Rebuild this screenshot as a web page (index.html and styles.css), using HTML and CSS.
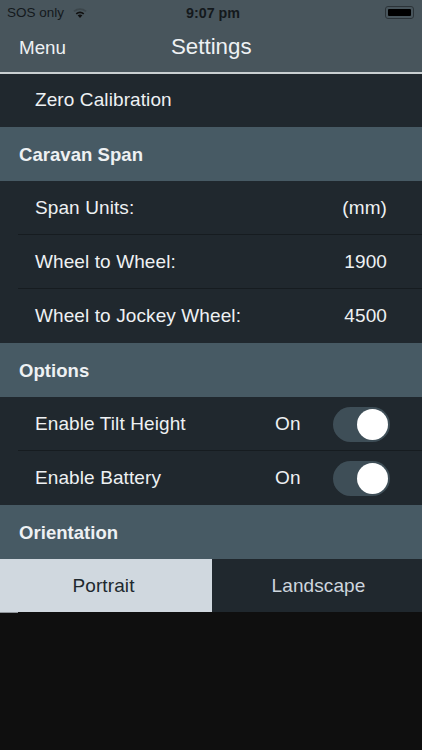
FILE: index.html
```html
<!DOCTYPE html>
<html>
<head>
    <title>Settings</title>
    <meta charset="UTF-8">
    <meta name="viewport" content="width=device-width, initial-scale=1.0">
    <link rel="stylesheet" href="styles.css">
</head>
<body>
    <div class="header">
        <div class="status-bar">
            <div class="status-left">
                <span>SOS only</span>
                <svg class="wifi" width="16" height="12" viewBox="0 0 16 12">
                    <path d="M8 11 L5.6 8.3 Q8 6.5 10.4 8.3 Z" fill="#111"/>
                    <path d="M3.7 6.2 Q8 2.9 12.3 6.2 L11.2 7.4 Q8 5 4.8 7.4 Z" fill="#111"/>
                    <path d="M1.3 3.7 Q8 -1.2 14.7 3.7 L13.4 5 Q8 1.2 2.6 5 Z" fill="#111" opacity="0.22"/>
                </svg>
            </div>
            <span class="status-time">9:07 pm</span>
            <div class="battery"><div class="battery-fill"></div></div>
        </div>
        <div class="nav-bar">
            <span class="nav-menu">Menu</span>
            <span class="nav-title">Settings</span>
        </div>
    </div>

    <div class="row row-first">
        <span>Zero Calibration</span>
    </div>

    <div class="section">Caravan Span</div>
    <div class="row row-line">
        <span>Span Units:</span>
        <span class="value">(mm)</span>
    </div>
    <div class="row row-line">
        <span>Wheel to Wheel:</span>
        <span class="value">1900</span>
    </div>
    <div class="row">
        <span>Wheel to Jockey Wheel:</span>
        <span class="value">4500</span>
    </div>

    <div class="section">Options</div>
    <div class="row row-line">
        <span>Enable Tilt Height</span>
        <div class="toggle-group">
            <span>On</span>
            <div class="toggle"><div class="knob"></div></div>
        </div>
    </div>
    <div class="row">
        <span>Enable Battery</span>
        <div class="toggle-group">
            <span>On</span>
            <div class="toggle"><div class="knob"></div></div>
        </div>
    </div>

    <div class="section">Orientation</div>
    <div class="segments">
        <div class="segment active">Portrait</div>
        <div class="segment">Landscape</div>
    </div>
    <div class="segment-tick"></div>
</body>
</html>
```

FILE: styles.css
```css
* {
    box-sizing: border-box;
}

body {
    font-family: "Liberation Sans", Arial, sans-serif;
    background-color: #0f0f0f;
    color: #eef1f3;
    margin: 0;
    width: 422px;
    height: 750px;
    overflow: hidden;
    font-size: 19px;
    letter-spacing: 0.1px;
}

.header {
    height: 74px;
    background-color: #48555c;
    border-bottom: 2px solid #c9cfd1;
}

.status-bar {
    height: 25px;
    padding: 0 8px 0 7px;
    display: grid;
    grid-template-columns: 1fr auto 1fr;
    align-items: center;
    color: #14191c;
    font-size: 13.5px;
    letter-spacing: 0;
}

.status-left {
    display: flex;
    align-items: center;
    gap: 8px;
}

.wifi {
    flex: none;
}

.status-time {
    font-weight: bold;
    font-size: 14.3px;
    margin-left: 5px;
}

.battery {
    justify-self: end;
    width: 29px;
    height: 13px;
    padding: 2px;
    border: 1px solid #2b3338;
    border-radius: 3px;
}

.battery-fill {
    height: 100%;
    background-color: #000;
    border-radius: 1px;
}

.nav-bar {
    height: 47px;
    padding: 0 19px 2px;
    display: flex;
    align-items: center;
    position: relative;
}

.nav-menu {
    font-size: 18.8px;
    letter-spacing: 0;
}

.nav-title {
    font-size: 22.3px;
    letter-spacing: 0;
    position: absolute;
    left: 171px;
    top: 9px;
}

.row {
    height: 54px;
    padding: 0 35px;
    display: flex;
    align-items: center;
    justify-content: space-between;
    background-color: #20282e;
}

.row-first {
    height: 53px;
    padding-bottom: 2px;
}

/* separator starts at the section text, not at the screen edge */
.row-line {
    background-image: linear-gradient(#161c20, #161c20);
    background-repeat: no-repeat;
    background-size: calc(100% - 18px) 1px;
    background-position: 18px 100%;
}

.section {
    height: 54px;
    padding: 2px 19px 0;
    display: flex;
    align-items: center;
    background-color: #475a64;
    font-weight: bold;
    font-size: 18.5px;
    letter-spacing: 0.05px;
}

.value {
    text-align: right;
}

.toggle-group {
    width: 115px;
    margin-right: -3px;
    display: flex;
    align-items: center;
    justify-content: space-between;
}

.toggle {
    width: 57px;
    height: 35px;
    padding: 2px;
    display: flex;
    justify-content: flex-end;
    background-color: #3e4e57;
    border-radius: 18px;
}

.knob {
    width: 31px;
    height: 31px;
    background-color: #fff;
    border-radius: 50%;
}

.segments {
    height: 53px;
    display: flex;
}

.segment {
    width: 210px;
    padding-left: 3px;
    display: flex;
    align-items: center;
    justify-content: center;
    background-color: #20282e;
    color: #ced6de;
}

.segment.active {
    width: 212px;
    padding: 0 5px 0 0;
    background-color: #d0d8df;
    color: #20282e;
}

.segment-tick {
    width: 18px;
    height: 1px;
    background-color: #8f9499;
}
```
